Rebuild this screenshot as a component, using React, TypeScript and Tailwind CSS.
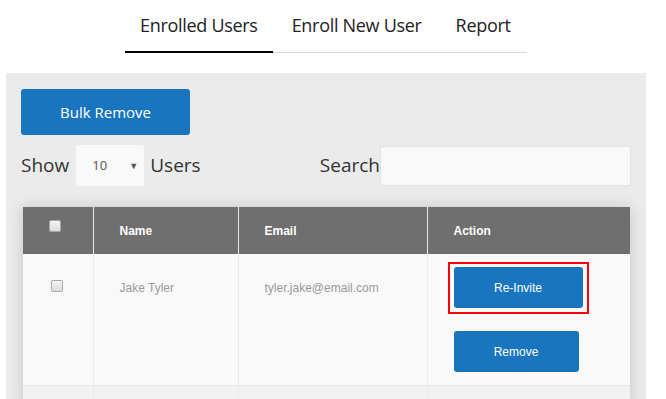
import { useState } from "react";

const UI_FONT = "font-['Open_Sans','Noto_Sans',sans-serif]";
const TABLE_FONT = "font-['Liberation_Sans',Arial,sans-serif]";

const TABS = ["Enrolled Users", "Enroll New User", "Report"];

function Tabs() {
  const [active, setActive] = useState(0);
  return (
    <nav className="ml-[125px] flex w-[402px] gap-[4px] border-b border-[#dcdcdc]">
      {TABS.map((t, i) => (
        <button
          key={t}
          onClick={() => setActive(i)}
          className={
            i === active
              ? "-mb-px shrink-0 whitespace-nowrap border-b-2 border-black px-[15px] pt-[13px] pb-[14px] text-[18px] leading-[24px] tracking-[-0.3px] text-[#222]"
              : "shrink-0 whitespace-nowrap px-[15px] pt-[13px] pb-[15px] text-[18px] leading-[24px] tracking-[-0.3px] text-[#222]"
          }
        >
          {t}
        </button>
      ))}
    </nav>
  );
}

function Check() {
  return (
    <span className="inline-block h-[12px] w-[12px] rounded-[2px] border border-[#a9a9a9] bg-gradient-to-b from-[#f4f4f4] to-[#dcdcdc]" />
  );
}

function ActionButtons({ highlight, labels = true }: { highlight?: boolean; labels?: boolean }) {
  const reinvite = (
    <button className="h-[41px] w-[129px] rounded-[3px] bg-[#1a75bf] text-[12px] text-white" aria-label="Re-Invite">
      {labels && "Re-Invite"}
    </button>
  );
  return (
    <div className="flex flex-col items-start gap-[23px]">
      {highlight ? (
        <div className="-mt-[5px] -mb-[6px] -ml-[6px] border-2 border-[#f00] px-[4px] pt-[3px] pb-[4px]">
          {reinvite}
        </div>
      ) : (
        reinvite
      )}
      <button className="h-[41px] w-[125px] rounded-[3px] bg-[#1a75bf] text-[12px] text-white" aria-label="Remove">
        {labels && "Remove"}
      </button>
    </div>
  );
}

export default function App() {
  return (
    <div className={`${UI_FONT} h-[399px] overflow-hidden bg-white`}>
      <Tabs />

      <section className="mx-[6px] mt-[20px] h-[400px] w-[640px] bg-[#ebebeb] px-[15px] pt-[16px]">
        <button className="h-[46px] w-[169px] rounded-[3px] bg-[#1a75bf] text-[15px] text-white">
          Bulk Remove
        </button>

        <div className="mt-[10px] flex items-center text-[19px] text-[#333]">
          <span>Show</span>
          <div className="ml-[7px] flex h-[41px] w-[68px] items-center justify-between rounded-[2px] bg-[#f9f9f9] pl-[16px] pr-[6px] text-[13px] text-[#555]">
            <span>10</span>
            <span className="text-[9px] text-[#555]">▼</span>
          </div>
          <span className="ml-[6px]">Users</span>

          <span className="ml-auto">Search</span>
          <input className="h-[40px] w-[251px] rounded-[2px] border border-[#e2e2e2] bg-[#f9f9f9]" />
        </div>

        <table
          className={`${TABLE_FONT} mt-[21px] ml-[2px] w-[607px] table-fixed border-collapse text-[12px] shadow-[0_0_14px_rgba(0,0,0,0.16)]`}
        >
          <colgroup>
            <col className="w-[70px]" />
            <col className="w-[145px]" />
            <col className="w-[189px]" />
            <col className="w-[203px]" />
          </colgroup>
          <thead>
            <tr className="h-[47px] bg-[#6f6f6f] text-left font-bold text-white">
              <th className="pl-[26px] align-middle">
                <span className="relative -top-[3px]">
                  <Check />
                </span>
              </th>
              <th className="border-l border-[#e8e8e8] pl-[26px]">Name</th>
              <th className="border-l border-[#e8e8e8] pl-[26px]">Email</th>
              <th className="border-l border-[#e8e8e8] pl-[26px]">Action</th>
            </tr>
          </thead>
          <tbody>
            <tr className="bg-[#f9f9f9] align-top text-[#999]">
              <td className="pt-[25px] pl-[28px]">
                <Check />
              </td>
              <td className="border-l border-[#ebebeb] pt-[13px] pl-[26px] leading-[42px]">
                Jake Tyler
              </td>
              <td className="border-l border-[#ebebeb] pt-[13px] pl-[26px] leading-[42px]">
                tyler.jake@email.com
              </td>
              <td className="border-l border-[#ebebeb] px-[26px] pt-[13px] pb-[13px]">
                <ActionButtons highlight />
              </td>
            </tr>
            <tr className="border-t border-[#e6e6e6] bg-[#f2f2f2] align-top text-[#999]">
              <td />
              <td className="border-l border-[#ebebeb]" />
              <td className="border-l border-[#ebebeb]" />
              <td className="border-l border-[#ebebeb] px-[26px] pt-[13px] pb-[13px]">
                <ActionButtons labels={false} />
              </td>
            </tr>
          </tbody>
        </table>
      </section>
    </div>
  );
}
